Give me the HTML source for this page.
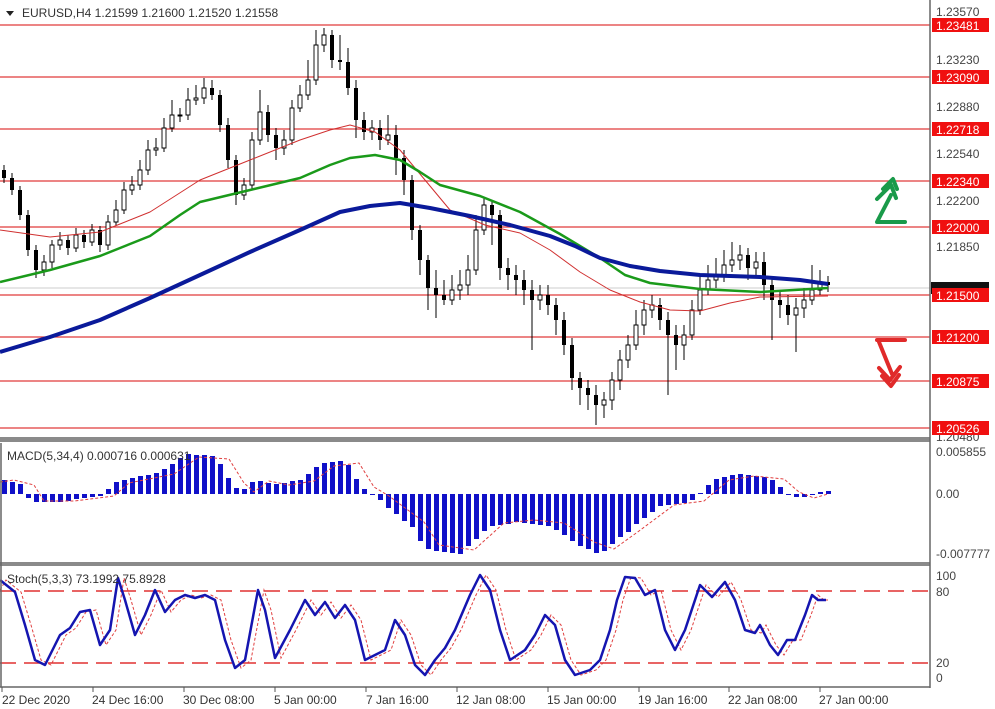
<!DOCTYPE html>
<html><head><meta charset="utf-8">
<style>
html,body{margin:0;padding:0;background:#fff;}
svg{display:block;font-family:"Liberation Sans","DejaVu Sans",sans-serif;}
</style></head>
<body>
<svg width="995" height="709" viewBox="0 0 995 709" xmlns="http://www.w3.org/2000/svg">
<rect width="995" height="709" fill="#fff"/>
<!-- grid -->
<line x1="0" y1="288" x2="930" y2="288" stroke="#ccc"/>
<g stroke="#e03a3a" stroke-width="1.3">
<line x1="0" y1="25" x2="930" y2="25"/><line x1="0" y1="77" x2="930" y2="77"/><line x1="0" y1="129" x2="930" y2="129"/><line x1="0" y1="181" x2="930" y2="181"/><line x1="0" y1="227" x2="930" y2="227"/><line x1="0" y1="295" x2="930" y2="295"/><line x1="0" y1="337" x2="930" y2="337"/><line x1="0" y1="381" x2="930" y2="381"/><line x1="0" y1="428" x2="930" y2="428"/>
</g>
<!-- candle wicks -->
<path fill="none" stroke="#000" stroke-width="1" d="M4 165V183M12 173V195M20 186V220M28 210V256M36 245V278M44 255V276M52 240V268M60 232V250M68 235V255M76 228V252M84 230V248M92 224V246M100 226V252M108 215V250M116 200V226M124 182V214M132 176V195M140 160V190M148 140V175M156 138V156M164 118V152M172 100V132M180 108V122M188 88V120M196 85V105M204 78V104M212 80V100M220 90V132M228 118V168M236 155V205M244 178V200M252 132V190M260 90V145M268 105V142M276 128V160M284 130V155M292 100V145M300 85V112M308 60V100M316 30V85M324 28V52M332 30V68M340 35V70M348 48V95M356 80V138M364 112V140M372 120V140M380 120V150M388 115V145M396 125V175M404 150V195M412 175V240M420 225V275M428 255V310M436 270V318M444 280V305M452 275V305M460 270V300M468 255V295M476 215V275M484 198V235M492 200V245M500 210V280M508 258V290M516 265V295M524 270V305M532 280V350M540 285V310M548 285V315M556 298V335M564 312V355M572 338V390M580 372V405M588 380V410M596 385V425M604 392V418M612 372V410M620 350V390M628 335V368M636 310V350M644 300V335M652 295V318M660 298V330M668 312V395M676 325V370M684 325V360M692 300V340M700 275V315M708 265V295M716 258V288M724 250V282M732 242V272M740 245V270M748 248V280M756 252V278M764 252V300M772 278V340M780 290V318M788 295V325M796 298V352M804 288V318M812 265V305M820 270V295M828 276V292"/>
<!-- bearish bodies -->
<path fill="#000" d="M2 170h4v8h-4zM10 178h4v12h-4zM18 190h4v25h-4zM26 215h4v35h-4zM34 250h4v20h-4zM66 240h4v8h-4zM82 235h4v7h-4zM98 230h4v15h-4zM210 88h4v7h-4zM218 95h4v30h-4zM226 125h4v35h-4zM234 160h4v35h-4zM266 112h4v23h-4zM274 135h4v13h-4zM330 35h4v25h-4zM338 60h4v2h-4zM346 62h4v26h-4zM354 88h4v32h-4zM362 120h4v12h-4zM378 128h4v12h-4zM394 135h4v23h-4zM402 158h4v22h-4zM410 180h4v50h-4zM418 230h4v30h-4zM426 260h4v28h-4zM434 288h4v7h-4zM442 295h4v5h-4zM490 205h4v10h-4zM498 215h4v53h-4zM506 268h4v7h-4zM514 275h4v5h-4zM522 280h4v10h-4zM530 290h4v10h-4zM546 295h4v10h-4zM554 305h4v15h-4zM562 320h4v25h-4zM570 345h4v33h-4zM578 378h4v10h-4zM586 388h4v7h-4zM594 395h4v10h-4zM658 305h4v15h-4zM666 320h4v15h-4zM674 335h4v10h-4zM746 255h4v13h-4zM762 262h4v23h-4zM770 285h4v15h-4zM778 300h4v5h-4zM786 305h4v10h-4zM826 282h4v3h-4z"/>
<!-- bullish bodies -->
<path fill="#fff" stroke="#000" stroke-width="0.9" d="M42 262h4v8h-4zM50 245h4v17h-4zM58 240h4v5h-4zM74 235h4v13h-4zM90 230h4v12h-4zM106 222h4v23h-4zM114 210h4v12h-4zM122 190h4v20h-4zM130 185h4v5h-4zM138 170h4v15h-4zM146 150h4v20h-4zM154 148h4v2h-4zM162 128h4v20h-4zM170 115h4v13h-4zM178 115h4v1h-4zM186 100h4v15h-4zM194 98h4v2h-4zM202 88h4v10h-4zM242 185h4v10h-4zM250 140h4v45h-4zM258 112h4v28h-4zM282 140h4v8h-4zM290 108h4v32h-4zM298 95h4v13h-4zM306 80h4v15h-4zM314 45h4v35h-4zM322 35h4v10h-4zM370 128h4v4h-4zM386 135h4v5h-4zM450 290h4v10h-4zM458 285h4v5h-4zM466 270h4v15h-4zM474 230h4v40h-4zM482 205h4v25h-4zM538 295h4v5h-4zM602 400h4v5h-4zM610 380h4v20h-4zM618 360h4v20h-4zM626 345h4v15h-4zM634 325h4v20h-4zM642 310h4v15h-4zM650 305h4v5h-4zM682 335h4v10h-4zM690 310h4v25h-4zM698 290h4v20h-4zM706 280h4v10h-4zM714 275h4v5h-4zM722 265h4v10h-4zM730 260h4v5h-4zM738 255h4v5h-4zM754 262h4v6h-4zM794 308h4v7h-4zM802 300h4v8h-4zM810 290h4v10h-4zM818 282h4v8h-4z"/>
<!-- MAs -->
<polyline fill="none" stroke="#d03030" stroke-width="1" stroke-linejoin="round" points="0,230 50,237 100,232 150,212 200,180 250,160 300,140 330,130 350,125 375,132 400,150 425,180 450,210 485,225 520,233 550,250 580,272 610,290 640,302 670,310 700,311 730,303 760,297 828,296"/>
<polyline fill="none" stroke="#1a9a1a" stroke-width="2.5" stroke-linejoin="round" points="0,282 50,270 100,256 150,236 180,215 200,202 250,190 300,178 330,165 350,158 375,155 400,160 420,172 440,185 480,196 520,212 560,234 600,258 625,275 650,283 700,289 760,292 828,288"/>
<polyline fill="none" stroke="#0a1a9a" stroke-width="4" stroke-linejoin="round" points="0,352 50,337 100,320 150,298 200,275 250,252 300,230 340,212 370,206 400,203 430,208 470,216 510,225 550,236 575,246 600,258 630,266 660,271 700,275 760,277 800,280 828,284"/>
<!-- MACD histogram -->
<path fill="#1010c8" d="M2 494v-14h5v14zM10 494v-12h5v12zM18 494v-10h5v10zM26 494v4h5v-4zM34 494v8h5v-8zM42 494v8h5v-8zM50 494v8h5v-8zM58 494v8h5v-8zM66 494v7h5v-7zM74 494v5h5v-5zM82 494v4h5v-4zM90 494v3h5v-3zM98 494v2h5v-2zM106 494v-5h5v5zM114 494v-12h5v12zM122 494v-14h5v14zM130 494v-16h5v16zM138 494v-18h5v18zM146 494v-19h5v19zM154 494v-21h5v21zM162 494v-25h5v25zM170 494v-30h5v30zM178 494v-36h5v36zM186 494v-40h5v40zM194 494v-39h5v39zM202 494v-39h5v39zM210 494v-38h5v38zM218 494v-30h5v30zM226 494v-16h5v16zM234 494v-6h5v6zM242 494v-5h5v5zM250 494v-12h5v12zM258 494v-13h5v13zM266 494v-11h5v11zM274 494v-10h5v10zM282 494v-11h5v11zM290 494v-13h5v13zM298 494v-14h5v14zM306 494v-20h5v20zM314 494v-27h5v27zM322 494v-31h5v31zM330 494v-32h5v32zM338 494v-33h5v33zM346 494v-29h5v29zM354 494v-15h5v15zM362 494v-5h5v5zM370 494v1h5v-1zM378 494v6h5v-6zM386 494v14h5v-14zM394 494v20h5v-20zM402 494v27h5v-27zM410 494v33h5v-33zM418 494v47h5v-47zM426 494v55h5v-55zM434 494v57h5v-57zM442 494v58h5v-58zM450 494v59h5v-59zM458 494v60h5v-60zM466 494v52h5v-52zM474 494v45h5v-45zM482 494v37h5v-37zM490 494v32h5v-32zM498 494v31h5v-31zM506 494v30h5v-30zM514 494v28h5v-28zM522 494v29h5v-29zM530 494v30h5v-30zM538 494v31h5v-31zM546 494v32h5v-32zM554 494v36h5v-36zM562 494v41h5v-41zM570 494v47h5v-47zM578 494v52h5v-52zM586 494v55h5v-55zM594 494v59h5v-59zM602 494v57h5v-57zM610 494v50h5v-50zM618 494v43h5v-43zM626 494v38h5v-38zM634 494v30h5v-30zM642 494v24h5v-24zM650 494v18h5v-18zM658 494v12h5v-12zM666 494v11h5v-11zM674 494v10h5v-10zM682 494v9h5v-9zM690 494v6h5v-6zM698 494v-1h5v1zM706 494v-9h5v9zM714 494v-15h5v15zM722 494v-17h5v17zM730 494v-19h5v19zM738 494v-20h5v20zM746 494v-19h5v19zM754 494v-18h5v18zM762 494v-17h5v17zM770 494v-14h5v14zM778 494v-7h5v7zM786 494v1h5v-1zM794 494v3h5v-3zM802 494v3h5v-3zM810 494v1h5v-1zM818 494v-2h5v2zM826 494v-3h5v3z"/>
<polyline fill="none" stroke="#e04040" stroke-width="1" stroke-dasharray="3,2" points="0,482 14,480 34,485 44,501 74,501 114,496 129,483 174,474 199,457 229,459 244,483 254,492 269,481 289,485 314,481 334,466 359,463 374,487 389,496 424,522 439,545 474,550 504,523 534,520 564,523 594,542 614,549 639,531 674,505 704,501 729,480 754,476 784,479 799,492 814,498 828,494"/>
<!-- Stoch -->
<line x1="0" y1="591" x2="930" y2="591" stroke="#e03030" stroke-width="1.5" stroke-dasharray="16,8"/>
<line x1="0" y1="663" x2="930" y2="663" stroke="#e03030" stroke-width="1.5" stroke-dasharray="16,8"/>
<polyline fill="none" stroke="#e04040" stroke-width="1" stroke-dasharray="3,2" points="0,590 6,580 21,592 31,625 41,660 51,665 61,645 66,635 76,628 86,612 96,610 106,645 116,630 124,578 131,600 141,635 151,615 161,590 171,612 181,600 191,595 201,598 211,595 221,600 231,640 241,668 251,660 264,590 271,610 281,658 296,630 311,600 321,615 331,602 341,618 351,605 361,620 371,660 381,655 391,650 401,620 411,635 421,665 431,675 441,660 451,648 461,630 476,595 486,575 496,590 506,630 516,660 531,650 541,635 551,615 561,625 571,660 581,675 596,670 606,660 616,630 623,600 631,577 641,578 651,595 661,590 671,630 681,650 691,630 706,585 718,597 731,582 741,600 751,630 761,633 766,625 776,645 784,655 793,640 801,640 811,615 818,595 824,600 828,600"/>
<polyline fill="none" stroke="#1515b0" stroke-width="2.5" stroke-linejoin="round" points="0,580 15,592 25,625 35,660 45,665 55,645 60,635 70,628 80,612 90,610 100,645 110,630 118,578 125,600 135,635 145,615 155,590 165,612 175,600 185,595 195,598 205,595 215,600 225,640 235,668 245,660 258,590 265,610 275,658 290,630 305,600 315,615 325,602 335,618 345,605 355,620 365,660 375,655 385,650 395,620 405,635 415,665 425,675 435,660 445,648 455,630 470,595 480,575 490,590 500,630 510,660 525,650 535,635 545,615 555,625 565,660 575,675 590,670 600,660 610,630 617,600 625,577 635,578 645,595 655,590 665,630 675,650 685,630 700,585 712,597 725,582 735,600 745,630 755,633 760,625 770,645 778,655 787,640 795,640 805,615 812,595 818,600 826,600"/>
<!-- panel borders -->
<rect x="0" y="437" width="930" height="5" fill="#8a8a8a"/>
<rect x="0" y="562" width="930" height="4" fill="#8a8a8a"/>
<line x1="0" y1="687" x2="930" y2="687" stroke="#666" stroke-width="1.5"/>
<line x1="930" y1="0" x2="930" y2="688" stroke="#666" stroke-width="1.5"/>
<line x1="1" y1="443" x2="1" y2="687" stroke="#666" stroke-width="1.5"/>
<!-- titles -->
<rect x="4" y="4" width="288" height="16" fill="#fff"/>
<path d="M6 11 L14 11 L10 16 Z" fill="#222"/>
<text x="22" y="17" font-size="12" fill="#333">EURUSD,H4  1.21599 1.21600 1.21520 1.21558</text>
<text x="7" y="460" font-size="12" fill="#333">MACD(5,34,4) 0.000716 0.000631</text>
<text x="7" y="583" font-size="12" fill="#333">Stoch(5,3,3) 73.1992 75.8928</text>
<!-- right axis -->
<g font-size="12" fill="#444">
<text x="936" y="16">1.23570</text>
<text x="936" y="64">1.23230</text>
<text x="936" y="111">1.22880</text>
<text x="936" y="158">1.22540</text>
<text x="936" y="205">1.22200</text>
<text x="936" y="251">1.21850</text>
<text x="936" y="441">1.20480</text>
<text x="936" y="456">0.005855</text>
<text x="936" y="498">0.00</text>
<text x="936" y="558">-0.007777</text>
<text x="936" y="580">100</text>
<text x="936" y="596">80</text>
<text x="936" y="667">20</text>
<text x="936" y="682">0</text>
</g>
<rect x="931" y="282" width="58" height="12" fill="#111"/>
<g fill="#f01010">
<rect x="932" y="18" width="57" height="14"/><rect x="932" y="70" width="57" height="14"/><rect x="932" y="122" width="57" height="14"/><rect x="932" y="174" width="57" height="14"/><rect x="932" y="220" width="57" height="14"/><rect x="932" y="288" width="57" height="14"/><rect x="932" y="330" width="57" height="14"/><rect x="932" y="374" width="57" height="14"/><rect x="932" y="421" width="57" height="14"/>
</g>
<g font-size="12" fill="#fff">
<text x="936" y="30">1.23481</text><text x="936" y="82">1.23090</text><text x="936" y="134">1.22718</text><text x="936" y="186">1.22340</text><text x="936" y="232">1.22000</text><text x="936" y="300">1.21500</text><text x="936" y="342">1.21200</text><text x="936" y="386">1.20875</text><text x="936" y="433">1.20526</text>
</g>
<!-- time axis -->
<g font-size="12" fill="#333">
<text x="2" y="704">22 Dec 2020</text>
<text x="92" y="704">24 Dec 16:00</text>
<text x="183" y="704">30 Dec 08:00</text>
<text x="274" y="704">5 Jan 00:00</text>
<text x="366" y="704">7 Jan 16:00</text>
<text x="456" y="704">12 Jan 08:00</text>
<text x="547" y="704">15 Jan 00:00</text>
<text x="638" y="704">19 Jan 16:00</text>
<text x="728" y="704">22 Jan 08:00</text>
<text x="819" y="704">27 Jan 00:00</text>
</g>
<g stroke="#555" stroke-width="1">
<line x1="2" y1="687" x2="2" y2="692"/><line x1="93" y1="687" x2="93" y2="692"/><line x1="184" y1="687" x2="184" y2="692"/><line x1="275" y1="687" x2="275" y2="692"/><line x1="366" y1="687" x2="366" y2="692"/><line x1="457" y1="687" x2="457" y2="692"/><line x1="548" y1="687" x2="548" y2="692"/><line x1="639" y1="687" x2="639" y2="692"/><line x1="729" y1="687" x2="729" y2="692"/><line x1="820" y1="687" x2="820" y2="692"/>
</g>
<!-- arrows -->
<g fill="none" stroke="#1a9a4a" stroke-width="4" stroke-linecap="round" stroke-linejoin="round">
<path d="M905 222 H877 L891 195"/>
<path d="M877 199 L891 185 L896 198"/>
<path d="M883 189 L893 179 L897 189"/>
</g>
<g fill="none" stroke="#e02a2a" stroke-width="4" stroke-linecap="round" stroke-linejoin="round">
<path d="M877 340 H905"/>
<path d="M879 342 L892 374"/>
<path d="M879 368 L890 380 L900 367"/>
<path d="M882 376 L891 386 L899 375"/>
</g>
</svg>
</body></html>
